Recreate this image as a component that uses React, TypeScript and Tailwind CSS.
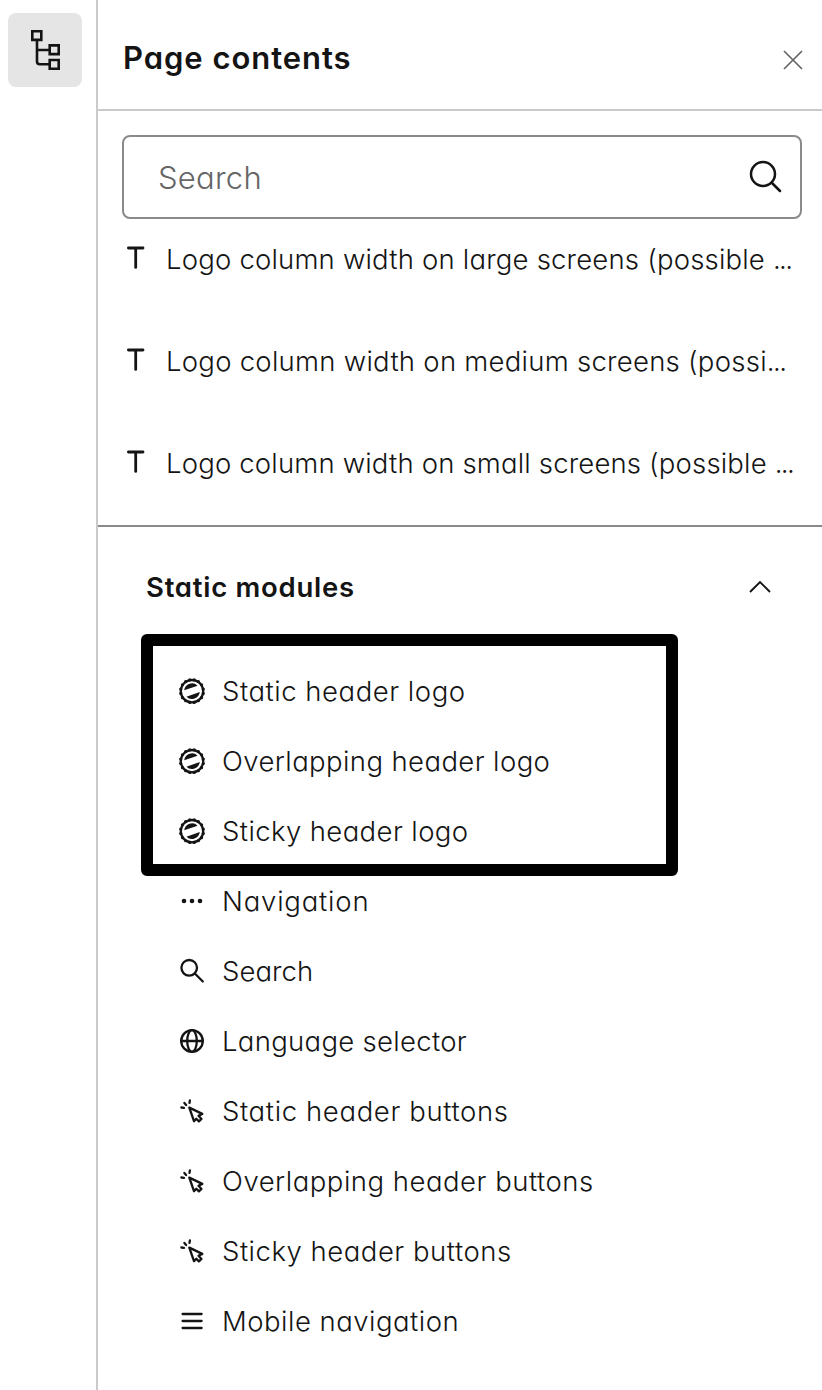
import React from 'react';

type IconName = 'seal' | 'dots' | 'search' | 'globe' | 'click' | 'menu';

interface RowItem {
  label: string;
  tracking: string;
  icon?: IconName;
}

const fields: RowItem[] = [
  { label: 'Logo column width on large screens (possible ', tracking: 'tracking-[0.19px]' },
  { label: 'Logo column width on medium screens (possi', tracking: 'tracking-[0.26px]' },
  { label: 'Logo column width on small screens (possible ', tracking: 'tracking-[0.17px]' },
];

const modules: RowItem[] = [
  { label: 'Static header logo', icon: 'seal', tracking: 'tracking-[0.53px]' },
  { label: 'Overlapping header logo', icon: 'seal', tracking: 'tracking-[0.4px]' },
  { label: 'Sticky header logo', icon: 'seal', tracking: 'tracking-[0.4px]' },
  { label: 'Navigation', icon: 'dots', tracking: 'tracking-[0.8px]' },
  { label: 'Search', icon: 'search', tracking: 'tracking-[0.05px]' },
  { label: 'Language selector', icon: 'globe', tracking: 'tracking-[0.3px]' },
  { label: 'Static header buttons', icon: 'click', tracking: 'tracking-[0.63px]' },
  { label: 'Overlapping header buttons', icon: 'click', tracking: 'tracking-[0.51px]' },
  { label: 'Sticky header buttons', icon: 'click', tracking: 'tracking-[0.52px]' },
  { label: 'Mobile navigation', icon: 'menu', tracking: 'tracking-[0.49px]' },
];

const scallops = Array.from({ length: 16 }, (_, i) => {
  const angle = (i * Math.PI) / 8 + Math.PI / 16;
  return { cx: 14 + 11.6 * Math.cos(angle), cy: 14.2 + 11.6 * Math.sin(angle) };
});

const iconShapes: Record<IconName, React.ReactNode> = {
  seal: (
    <>
      <circle cx="14" cy="14.2" r="11.2" strokeWidth="2.3" />
      <g fill="currentColor" stroke="none">
        {scallops.map((dot, i) => (
          <circle key={i} cx={dot.cx} cy={dot.cy} r="1.5" />
        ))}
        <path d="M6.2 13.3A7.9 7.9 0 0 1 19.6 8.7Z" />
        <path d="M21.8 15.1A7.9 7.9 0 0 1 8.4 19.7Z" />
      </g>
    </>
  ),
  dots: (
    <g fill="currentColor" stroke="none">
      <circle cx="6" cy="14" r="2.3" />
      <circle cx="14" cy="14" r="2.3" />
      <circle cx="22" cy="14" r="2.3" />
    </g>
  ),
  search: (
    <>
      <circle cx="11.2" cy="10.8" r="7.8" />
      <path d="m16.8 16.5 8 8" />
    </>
  ),
  globe: (
    <>
      <circle cx="14" cy="14" r="10.8" />
      <ellipse cx="14" cy="14" rx="4.8" ry="10.8" />
      <path d="M3.2 14h21.6" />
    </>
  ),
  click: (
    <path d="m3.4 10.5 2.6.3M6.4 6l1.7 2M11.9 3.5l-.4 2.4M11.3 10.6l13 6.3-3.8 1.9 3 3.2-2.6 2.4-2.6-2.6-2.3 2.4Z" />
  ),
  menu: <path d="M4.6 7h19M4.6 14h19M4.6 21h19" />,
};

const ModuleIcon: React.FC<{ name: IconName }> = ({ name }) => (
  <svg
    className="h-7 w-7 shrink-0"
    viewBox="0 0 28 28"
    fill="none"
    stroke="currentColor"
    strokeWidth="2.3"
    strokeLinecap="round"
    strokeLinejoin="round"
  >
    {iconShapes[name]}
  </svg>
);

const TextIcon: React.FC = () => (
  <svg className="h-7 w-7 shrink-0" viewBox="0 0 28 28" fill="none" stroke="currentColor" strokeWidth="2.8" strokeLinecap="round">
    <path d="M6.4 2h14.6M13.7 2v19.4" />
  </svg>
);

const App: React.FC = () => {
  return (
    <div className="flex h-[1390px] w-[822px] overflow-hidden bg-white font-['Inter',sans-serif] text-[27.5px] font-light text-[#141414] [font-feature-settings:'cv11']">
      <aside className="w-[98px] shrink-0 border-r-2 border-[#cacaca] pt-[13px] pl-2">
        <button className="flex h-[74px] w-[74px] items-center justify-center rounded-lg bg-[#e5e5e5]">
          <svg className="h-11 w-11" viewBox="23 28 44 44" fill="none" stroke="currentColor" strokeWidth="2.6">
            <path d="M32.3 31.3h9v8.6h-9zM49.7 45.4h9v8.7h-9zM49.7 60h9v8.7h-9z" />
            <path d="M37 40v21.5q0 2.7 2.7 2.7h10M37 50h12.5" />
          </svg>
        </button>
      </aside>

      <main className="min-w-0 flex-1">
        <header className="flex h-[111px] items-center justify-between border-b-2 border-[#cacaca] pr-[19px] pl-[25px]">
          <h1 className="mt-2 text-[31px] font-semibold tracking-[0.95px]">Page contents</h1>
          <svg className="mt-[11px] h-5 w-5 text-[#666]" viewBox="0 0 20 20" stroke="currentColor" strokeWidth="1.7">
            <path d="m1 1 18 18M19 1 1 19" />
          </svg>
        </header>

        <div className="mx-5 mt-6 ml-6 flex h-[84px] items-center justify-between rounded-lg border-2 border-[#8a8a8a] pr-[17px] pl-[34px]">
          <span className="pt-0.5 text-[31px] tracking-[0.25px] text-[#666]">Search</span>
          <svg className="h-9 w-9" viewBox="0 0 36 36" fill="none" stroke="currentColor" strokeWidth="2.5" strokeLinecap="round">
            <circle cx="16" cy="15" r="12" />
            <path d="m25 24 8 8" />
          </svg>
        </div>

        <ul className="flex flex-col gap-[60px] border-b-2 border-[#8a8a8a] pt-5 pb-10 pl-6">
          {fields.map((field) => (
            <li key={field.label} className="flex h-[42px] items-center gap-4">
              <TextIcon />
              <span className={`whitespace-pre ${field.tracking}`}>
                {field.label}
                <span className="tracking-[-1.6px]">...</span>
              </span>
            </li>
          ))}
        </ul>

        <section>
          <div className="flex h-[129px] items-center justify-between pr-[51px] pb-[9px] pl-12">
            <h2 className="pt-0.5 font-semibold tracking-[0.75px]">Static modules</h2>
            <svg className="h-3.5 w-[22px]" viewBox="0 0 22 14" fill="none" stroke="currentColor" strokeWidth="1.9">
              <path d="M1 12 11 2l10 10" />
            </svg>
          </div>
          <ul className="relative pl-20">
            {modules.map((item) => (
              <li key={item.label} className="flex h-[70px] items-center gap-4">
                {item.icon && <ModuleIcon name={item.icon} />}
                <span className={`pt-0.5 whitespace-nowrap ${item.tracking}`}>{item.label}</span>
              </li>
            ))}
            {/* highlight around the logo modules */}
            <li
              aria-hidden="true"
              className="pointer-events-none absolute -top-[22px] left-[43px] h-[242px] w-[537px] rounded-md border-12 border-black"
            />
          </ul>
        </section>
      </main>
    </div>
  );
};

export default App;
